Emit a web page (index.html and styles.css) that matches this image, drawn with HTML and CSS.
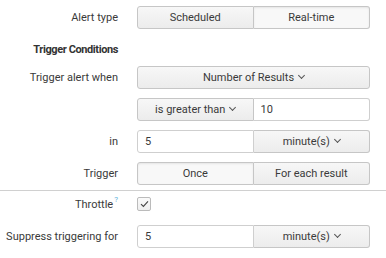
FILE: index.html
```html
<!DOCTYPE html>
<html>
<head>
<meta charset="utf-8">
<link rel="stylesheet" href="styles.css">
</head>
<body>
<div class="form">
  <div class="row">
    <div class="label">Alert type</div>
    <div class="control">
      <div class="group">
        <button class="btn half">Scheduled</button>
        <button class="btn half active">Real-time</button>
      </div>
    </div>
  </div>
  <div class="row title-row">
    <div class="label title">Trigger Conditions</div>
  </div>
  <div class="row">
    <div class="label">Trigger alert when</div>
    <div class="control">
      <button class="btn full">Number of Results <span class="caret"></span></button>
    </div>
  </div>
  <div class="row">
    <div class="label"></div>
    <div class="control">
      <div class="group">
        <button class="btn half">is greater than <span class="caret"></span></button>
        <input class="input half" value="10">
      </div>
    </div>
  </div>
  <div class="row">
    <div class="label">in</div>
    <div class="control">
      <div class="group">
        <input class="input half" value="5">
        <button class="btn half">minute(s) <span class="caret"></span></button>
      </div>
    </div>
  </div>
  <div class="row">
    <div class="label">Trigger</div>
    <div class="control">
      <div class="group">
        <button class="btn half active">Once</button>
        <button class="btn half">For each result</button>
      </div>
    </div>
  </div>
  <hr class="sep">
  <div class="row check-row">
    <div class="label">Throttle<sup class="help">?</sup></div>
    <div class="control">
      <span class="checkbox">
        <svg width="9" height="8" viewBox="0 0 9 8"><path d="M1 4.2 L3.4 6.4 L8 1.4" fill="none" stroke="#444" stroke-width="1.1"/></svg>
      </span>
    </div>
  </div>
  <div class="row">
    <div class="label">Suppress triggering for</div>
    <div class="control">
      <div class="group">
        <input class="input half" value="5">
        <button class="btn half">minute(s) <span class="caret"></span></button>
      </div>
    </div>
  </div>
</div>
</body>
</html>
```

FILE: styles.css
```css
html, body {
  margin: 0;
  padding: 0;
  background: #fff;
}
body {
  font-family: Roboto, "Liberation Sans", sans-serif;
  font-size: 11px;
  color: #3a3a3a;
}
.form {
  padding-top: 6px;
}
.row {
  display: flex;
  align-items: center;
  height: 23px;
  margin-bottom: 9px;
}
.label {
  width: 118px;
  text-align: right;
  flex: none;
  white-space: nowrap;
}
.title {
  font-weight: bold;
  color: #333;
  letter-spacing: -0.4px;
}
.title-row {
  margin-top: 3px;
  margin-bottom: 5px;
}
.control {
  margin-left: 19px;
  width: 233px;
}
.group {
  display: flex;
}
.btn {
  box-sizing: border-box;
  height: 23px;
  font-family: inherit;
  font-size: 11px;
  color: #3a3a3a;
  border: 1px solid #c6c6c6;
  border-radius: 3px;
  background: linear-gradient(#f7f7f7, #ececec);
  padding: 0 6px;
  margin: 0;
  display: flex;
  align-items: center;
  justify-content: center;
}
.full {
  width: 233px;
}
.half {
  width: 50%;
  flex: 1 1 50%;
}
.group > :first-child {
  border-top-right-radius: 0;
  border-bottom-right-radius: 0;
}
.group > :last-child {
  border-top-left-radius: 0;
  border-bottom-left-radius: 0;
  border-left: none;
}
.btn.active {
  background: #f8f8f8;
  box-shadow: inset 0 1px 2px rgba(0,0,0,0.08);
}
.input {
  box-sizing: border-box;
  height: 23px;
  font-family: inherit;
  font-size: 11px;
  color: #3a3a3a;
  border: 1px solid #cfcfcf;
  border-radius: 3px;
  background: #fff;
  padding: 0 7px;
  margin: 0;
  min-width: 0;
  outline: none;
}
.caret {
  display: inline-block;
  width: 4px;
  height: 4px;
  border-right: 1px solid #555;
  border-bottom: 1px solid #555;
  transform: rotate(45deg);
  margin-left: 5px;
  margin-top: -4px;
}
.sep {
  border: none;
  border-top: 1px solid #d0d0d0;
  margin: -4px 0 5px 0;
  height: 0;
}
.help {
  color: #5fb3dc;
  font-size: 8px;
  vertical-align: top;
  position: relative;
  top: -3px;
  margin-left: 1px;
}
.check-row {
  height: 16px;
  margin-bottom: 13px;
}
.checkbox {
  box-sizing: border-box;
  display: flex;
  align-items: center;
  justify-content: center;
  width: 14px;
  height: 14px;
  border: 1px solid #bbb;
  border-radius: 2px;
  background: linear-gradient(#fafafa, #eee);
}
```
